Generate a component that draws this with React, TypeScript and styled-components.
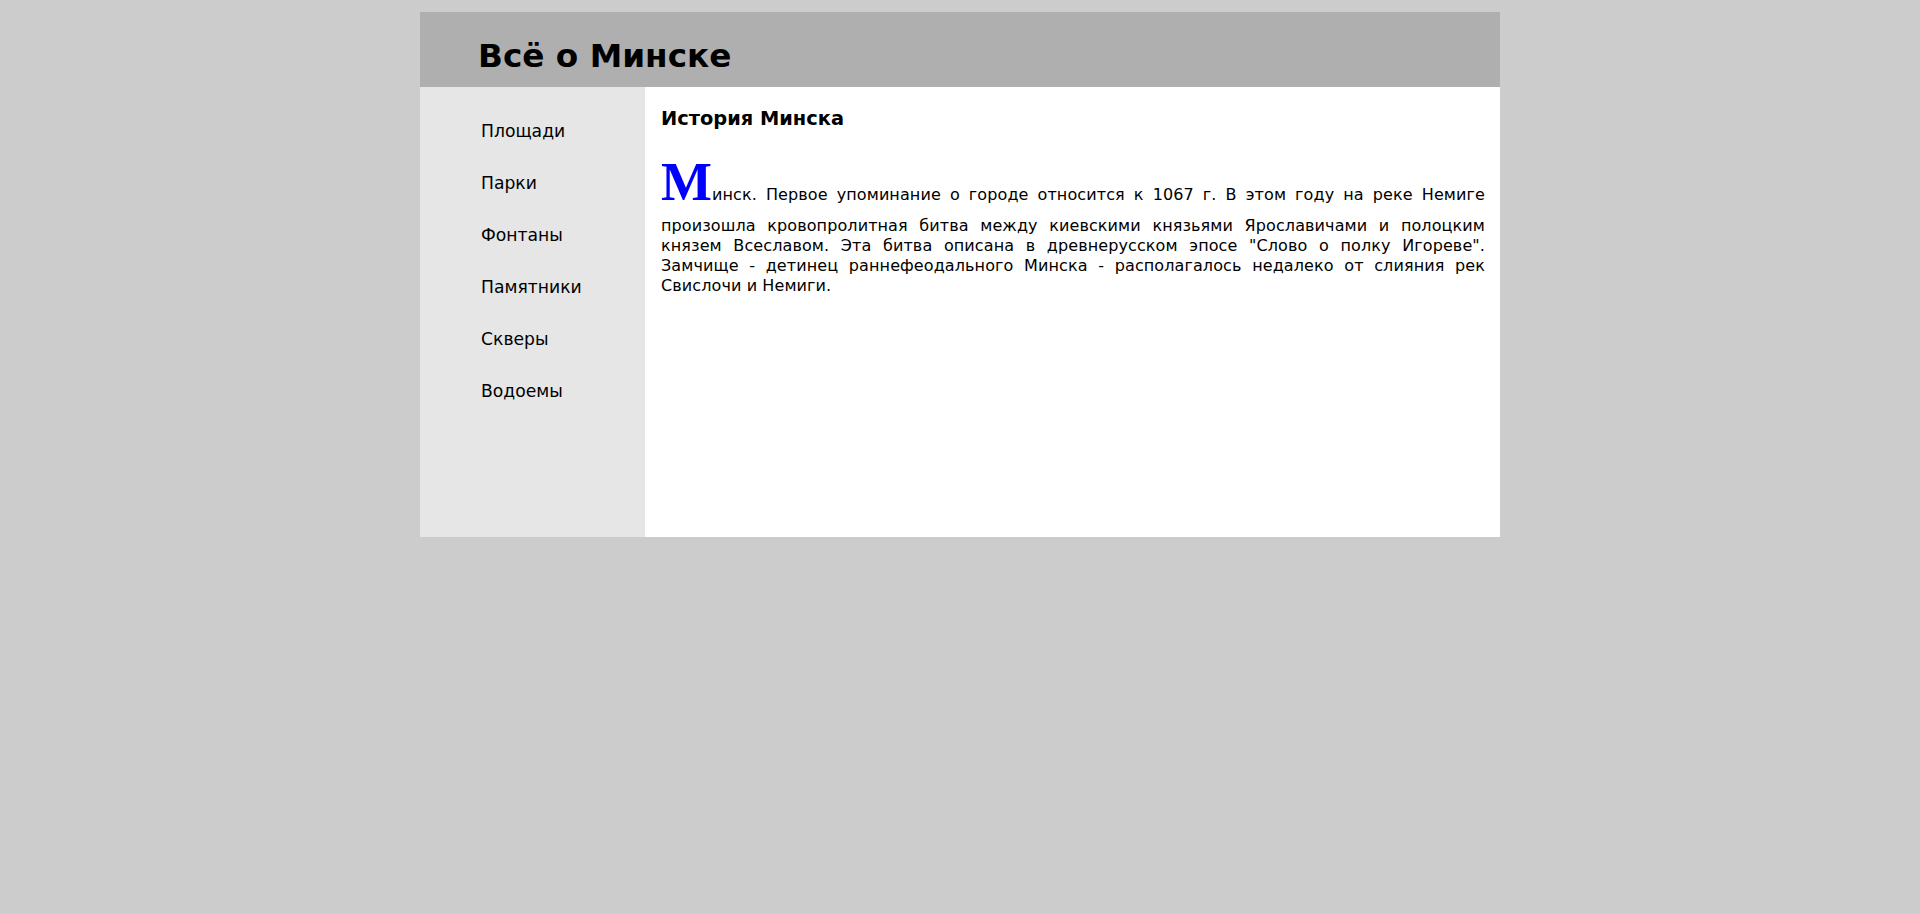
import React from "react";
import styled, { createGlobalStyle } from "styled-components";

const GlobalStyle = createGlobalStyle`
  html, body {
    margin: 0;
    padding: 0;
    background: #cccccc;
  }
  body {
    font-family: "DejaVu Sans", Verdana, sans-serif;
    color: #000;
  }
`;

const Page = styled.div`
  padding-top: 12px;
  display: flex;
  justify-content: center;
`;

const Container = styled.div`
  width: 1080px;
  display: flex;
  flex-direction: column;
`;

const Header = styled.header`
  height: 75px;
  box-sizing: border-box;
  background: #afafaf;
  padding: 28px 0 0 58px;
`;

const Title = styled.h1`
  margin: 0;
  font-size: 32.7px;
  line-height: 33px;
  font-weight: bold;
`;

const Main = styled.div`
  display: flex;
  min-height: 450px;
`;

const Sidebar = styled.nav`
  width: 225px;
  flex: none;
  background: #e6e6e6;
  box-sizing: border-box;
  padding: 18px 0 0 61px;
`;

const NavList = styled.ul`
  list-style: none;
  margin: 0;
  padding: 0;
  display: flex;
  flex-direction: column;
`;

const NavItem = styled.li`
  font-size: 17.2px;
  line-height: 52px;
  height: 52px;
`;

const Content = styled.main`
  flex: 1;
  background: #ffffff;
  box-sizing: border-box;
  padding: 21px 15px 0 16px;
`;

const Heading = styled.h3`
  margin: 0 0 19px;
  font-size: 19.4px;
  line-height: 22px;
  font-weight: bold;
`;

const Paragraph = styled.p`
  margin: 0;
  font-size: 16px;
  letter-spacing: 0.1px;
  line-height: 20px;
  text-align: justify;
`;

const DropCap = styled.span`
  font-family: "Liberation Serif", "Times New Roman", serif;
  font-weight: bold;
  font-size: 54px;
  line-height: 67px;
  letter-spacing: 0;
  color: #0000ff;
`;

const navItems = ["Площади", "Парки", "Фонтаны", "Памятники", "Скверы", "Водоемы"];

export default function App() {
  return (
    <>
      <GlobalStyle />
      <Page>
        <Container>
          <Header>
            <Title>Всё о Минске</Title>
          </Header>
          <Main>
            <Sidebar>
              <NavList>
                {navItems.map((item) => (
                  <NavItem key={item}>{item}</NavItem>
                ))}
              </NavList>
            </Sidebar>
            <Content>
              <Heading>История Минска</Heading>
              <Paragraph>
                <DropCap>М</DropCap>инск. Первое упоминание о городе относится к 1067 г. В этом году на
                реке Немиге произошла кровопролитная битва между киевскими князьями Ярославичами и
                полоцким князем Всеславом. Эта битва описана в древнерусском эпосе "Слово о полку
                Игореве". Замчище - детинец раннефеодального Минска - располагалось недалеко от
                слияния рек Свислочи и Немиги.
              </Paragraph>
            </Content>
          </Main>
        </Container>
      </Page>
    </>
  );
}
